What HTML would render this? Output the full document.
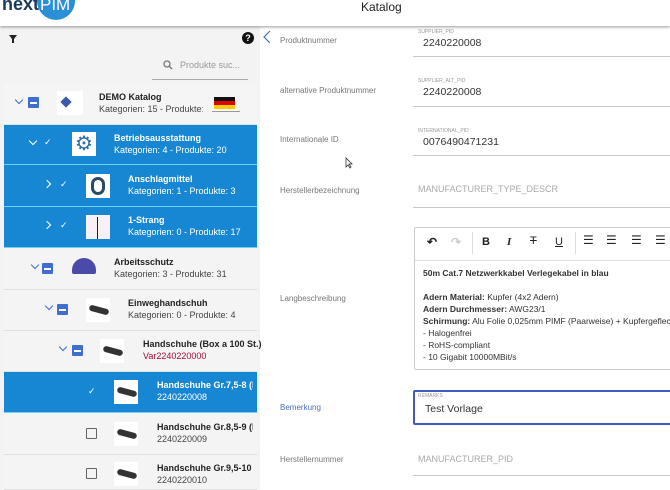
<!DOCTYPE html>
<html><head><meta charset="utf-8"><style>
*{box-sizing:border-box;margin:0;padding:0}
body{width:670px;height:490px;overflow:hidden;background:#fff;font-family:"Liberation Sans",Arial,sans-serif;position:relative}
.a{position:absolute;white-space:nowrap}
#hdr{position:absolute;left:0;top:0;width:670px;height:26px;background:#fff;box-shadow:0 1px 3px rgba(0,0,0,.4);z-index:5;overflow:hidden}
#left{position:absolute;left:0;top:26px;width:260px;height:464px;background:#f3f3f3}
.row{position:absolute;left:4px;width:253px;height:41px;background:#f4f4f4;border-bottom:1px solid #e0e0e0}
.row.b{background:#1787d3;border-bottom:1px solid #6fd3ef}
.t1{font-size:9px;font-weight:bold;color:#222;position:absolute;white-space:nowrap;overflow:hidden}
.t2{font-size:9px;color:#444;position:absolute;white-space:nowrap;overflow:hidden}
.b .t1,.b .t2{color:#fff}
.cb{position:absolute;width:11px;height:11px;background:#3e6fd0;border-radius:1px}
.cb:after{content:"";position:absolute;left:2px;top:5px;width:7px;height:1.5px;background:#fff}
.ecb{position:absolute;width:11px;height:11px;border:1.5px solid #666;border-radius:1px}
.img{position:absolute;width:24px;height:24px;background:#fff}
.lbl{position:absolute;left:280px;font-size:8px;color:#777;white-space:nowrap}
.sm{position:absolute;left:418px;font-size:5px;color:#999;white-space:nowrap}
.val{position:absolute;left:423px;font-size:10.5px;color:#333;white-space:nowrap}
.ph{position:absolute;left:418px;font-size:9px;color:#aaa;white-space:nowrap}
.ul{position:absolute;left:413px;width:257px;height:1px;background:#c8c8c8}
.ed{position:absolute;left:414px;top:227px;width:260px;height:143px;border:1px solid #ccc;border-radius:2px}
.tb{position:absolute;font-size:12px;color:#222;font-weight:bold;white-space:nowrap}
.et{position:absolute;left:423px;font-size:8.5px;color:#333;white-space:nowrap}
.chv{position:absolute;width:6px;height:6px;border-right:1.5px solid #fff;border-bottom:1.5px solid #fff}
</style></head><body>
<div id="hdr">
 <div class="a" style="left:-4px;top:-6px;font-size:18px;font-weight:bold;color:#1a3a5a">·next</div>
 <div class="a" style="left:37px;top:-18px;width:38px;height:38px;border-radius:50%;background:#2a8fd6"></div>
 <div class="a" style="left:40px;top:-5px;font-size:17px;color:#fff">PIM</div>
 <div class="a" style="left:361px;top:0px;font-size:12px;color:#222">Katalog</div>
</div>
<div id="left">
 <svg class="a" style="left:9px;top:9px" width="8" height="8" viewBox="0 0 8 8"><path d="M0 0H8L5 4V8H3V4Z" fill="#222"/></svg>
 <div class="a" style="left:242px;top:6px;width:12px;height:12px;border-radius:50%;background:#111;color:#fff;font-size:9px;font-weight:bold;text-align:center;line-height:12px">?</div>
 <svg class="a" style="left:163px;top:34px" width="10" height="10" viewBox="0 0 10 10"><circle cx="4" cy="4" r="3" fill="none" stroke="#777" stroke-width="1.3"/><path d="M6 6L9 9" stroke="#777" stroke-width="1.3"/></svg>
 <div class="a" style="left:180px;top:34px;font-size:9px;color:#999">Produkte suc...</div>
 <div class="a" style="left:152px;top:53px;width:96px;height:1px;background:#aaa"></div>
</div>
<div class="row" style="top:83px;height:42px;background:#f5f5f5">
 <div class="chv" style="left:12px;top:14px;border-color:#3e6fd0;transform:rotate(45deg)"></div>
 <div class="cb" style="left:24px;top:14px"></div>
 <div class="img" style="left:53px;top:8px;width:26px"><div class="a" style="left:5px;top:7px;width:8px;height:8px;background:#3a5ab0;transform:rotate(45deg)"></div></div>
 <div class="t1" style="left:95px;top:9px">DEMO Katalog</div>
 <div class="t2" style="left:95px;top:21px;width:104px">Kategorien: 15 - Produkte: 96</div>
 <div class="a" style="left:210px;top:14px;width:21px;height:4px;background:#111"></div>
 <div class="a" style="left:210px;top:18px;width:21px;height:4px;background:#d00"></div>
 <div class="a" style="left:210px;top:22px;width:21px;height:4px;background:#fc0"></div>
 <div class="a" style="left:208px;top:28px;width:28px;height:1px;background:#999"></div>
</div>
<div class="row b" style="top:125px;height:40px">
 <div class="chv" style="left:26px;top:13px;transform:rotate(45deg)"></div>
 <div class="a" style="left:40px;top:12px;font-size:9px;color:#fff">✓</div>
 <div class="img" style="left:68px;top:7px;color:#2a6fb0;font-size:20px;line-height:24px;text-align:center">⚙</div>
 <div class="t1" style="left:110px;top:8px">Betriebsausstattung</div>
 <div class="t2" style="left:110px;top:20px">Kategorien: 4 - Produkte: 20</div>
</div>
<div class="row b" style="top:165px;height:42px">
 <div class="chv" style="left:40px;top:16px;transform:rotate(-45deg)"></div>
 <div class="a" style="left:56px;top:14px;font-size:9px;color:#fff">✓</div>
 <div class="img" style="left:82px;top:9px"><div class="a" style="left:5px;top:3px;width:14px;height:18px;border:3px solid #2a4a6a;border-radius:7px"></div></div>
 <div class="t1" style="left:124px;top:9px">Anschlagmittel</div>
 <div class="t2" style="left:124px;top:21px">Kategorien: 1 - Produkte: 3</div>
</div>
<div class="row b" style="top:207px;height:41px">
 <div class="chv" style="left:40px;top:15px;transform:rotate(-45deg)"></div>
 <div class="a" style="left:56px;top:13px;font-size:9px;color:#fff">✓</div>
 <div class="img" style="left:82px;top:8px;background:#f8f0f4"><div class="a" style="left:11px;top:2px;width:1px;height:22px;background:#222"></div></div>
 <div class="t1" style="left:124px;top:8px">1-Strang</div>
 <div class="t2" style="left:124px;top:20px">Kategorien: 0 - Produkte: 17</div>
</div>
<div class="row" style="top:248px;height:42px">
 <div class="chv" style="left:28px;top:14px;border-color:#3e6fd0;transform:rotate(45deg)"></div>
 <div class="cb" style="left:38px;top:15px"></div>
 <div class="a" style="left:68px;top:10px;width:24px;height:16px;background:#4a4aa8;border-radius:12px 12px 2px 2px"></div>
 <div class="t1" style="left:110px;top:9px">Arbeitsschutz</div>
 <div class="t2" style="left:110px;top:21px">Kategorien: 3 - Produkte: 31</div>
</div>
<div class="row" style="top:290px;height:41px">
 <div class="chv" style="left:42px;top:13px;border-color:#3e6fd0;transform:rotate(45deg)"></div>
 <div class="cb" style="left:53px;top:14px"></div>
 <div class="img" style="left:82px;top:8px"><div class="a" style="left:3px;top:9px;width:20px;height:6px;background:#333;border-radius:3px;transform:rotate(15deg)"></div></div>
 <div class="t1" style="left:124px;top:8px">Einweghandschuh</div>
 <div class="t2" style="left:124px;top:20px">Kategorien: 0 - Produkte: 4</div>
</div>
<div class="row" style="top:331px;height:41px">
 <div class="chv" style="left:56px;top:13px;border-color:#3e6fd0;transform:rotate(45deg)"></div>
 <div class="cb" style="left:68px;top:14px"></div>
 <div class="img" style="left:96px;top:8px"><div class="a" style="left:3px;top:9px;width:20px;height:6px;background:#333;border-radius:3px;transform:rotate(15deg)"></div></div>
 <div class="t1" style="left:139px;top:8px">Handschuhe (Box a 100 St.)</div>
 <div class="t2" style="left:139px;top:20px;color:#a0103a">Var2240220000</div>
</div>
<div class="row b" style="top:372px;height:41px">
 <div class="a" style="left:84px;top:14px;font-size:9px;color:#fff">✓</div>
 <div class="img" style="left:110px;top:8px"><div class="a" style="left:3px;top:9px;width:20px;height:6px;background:#333;border-radius:3px;transform:rotate(15deg)"></div></div>
 <div class="t1" style="left:153px;top:8px;width:96px">Handschuhe Gr.7,5-8 (Box</div>
 <div class="t2" style="left:153px;top:20px">2240220008</div>
</div>
<div class="row" style="top:413px;height:42px">
 <div class="ecb" style="left:82px;top:15px"></div>
 <div class="img" style="left:110px;top:9px"><div class="a" style="left:3px;top:9px;width:20px;height:6px;background:#333;border-radius:3px;transform:rotate(15deg)"></div></div>
 <div class="t1" style="left:153px;top:9px;width:96px">Handschuhe Gr.8,5-9 (Box</div>
 <div class="t2" style="left:153px;top:21px">2240220009</div>
</div>
<div class="row" style="top:455px;height:35px">
 <div class="ecb" style="left:82px;top:13px"></div>
 <div class="img" style="left:110px;top:7px"><div class="a" style="left:3px;top:9px;width:20px;height:6px;background:#333;border-radius:3px;transform:rotate(15deg)"></div></div>
 <div class="t1" style="left:153px;top:8px;width:96px">Handschuhe Gr.9,5-10 (Bo</div>
 <div class="t2" style="left:153px;top:20px">2240220010</div>
</div>

<svg class="a" style="left:263px;top:30px" width="8" height="14" viewBox="0 0 8 14"><path d="M7 1L1 7L7 13" fill="none" stroke="#4a6fc0" stroke-width="1.2"/></svg>
<div class="lbl" style="top:36px">Produktnummer</div>
<div class="sm" style="top:29px">SUPPLIER_PID</div>
<div class="val" style="top:37px">2240220008</div>
<div class="ul" style="top:56px"></div>
<div class="lbl" style="top:86px">alternative Produktnummer</div>
<div class="sm" style="top:78px">SUPPLIER_ALT_PID</div>
<div class="val" style="top:86px">2240220008</div>
<div class="ul" style="top:106px"></div>
<div class="lbl" style="top:135px">Internationale ID</div>
<div class="sm" style="top:128px">INTERNATIONAL_PID</div>
<div class="val" style="top:136px">0076490471231</div>
<div class="ul" style="top:155px"></div>
<svg class="a" style="left:345px;top:157px" width="8" height="12" viewBox="0 0 8 12"><path d="M1 1V10L3 8L5 11L6 10L4 7H7Z" fill="#fff" stroke="#333" stroke-width=".8"/></svg>
<div class="lbl" style="top:186px">Herstellerbezeichnung</div>
<div class="ph" style="top:184px">MANUFACTURER_TYPE_DESCR</div>
<div class="ul" style="top:207px"></div>
<div class="ed"><div class="a" style="left:0;top:32px;width:260px;height:1px;background:#ddd"></div></div>
<div class="tb" style="left:427px;top:235px">↶</div>
<div class="tb" style="left:451px;top:235px;color:#ccc">↷</div>
<div class="a" style="left:472px;top:232px;width:1px;height:22px;background:#ddd"></div>
<div class="tb" style="left:482px;top:236px;font-size:11px">B</div>
<div class="tb" style="left:507px;top:236px;font-size:11px;font-style:italic;font-family:'Liberation Serif',serif">I</div>
<div class="tb" style="left:530px;top:235px;font-size:11px;text-decoration:line-through;font-weight:normal">T</div>
<div class="tb" style="left:555px;top:236px;font-size:11px;text-decoration:underline;font-weight:normal">U</div>
<div class="a" style="left:575px;top:232px;width:1px;height:22px;background:#ddd"></div>
<div class="tb" style="left:583px;top:233px;font-weight:normal">☰</div>
<div class="tb" style="left:606px;top:233px;font-weight:normal">☰</div>
<div class="tb" style="left:631px;top:233px;font-weight:normal">☰</div>
<div class="tb" style="left:655px;top:233px;font-weight:normal">☰</div>
<div class="et" style="top:268px;font-weight:bold">50m Cat.7 Netzwerkkabel Verlegekabel in blau</div>
<div class="et" style="top:292px"><b>Adern Material:</b> Kupfer (4x2 Adern)</div>
<div class="et" style="top:304px"><b>Adern Durchmesser:</b> AWG23/1</div>
<div class="et" style="top:316px"><b>Schirmung:</b> Alu Folie 0,025mm PIMF (Paarweise) + Kupfergeflecht</div>
<div class="et" style="top:328px">- Halogenfrei</div>
<div class="et" style="top:340px">- RoHS-compliant</div>
<div class="et" style="top:352px">- 10 Gigabit 10000MBit/s</div>
<div class="lbl" style="top:294px">Langbeschreibung</div>
<div class="lbl" style="top:403px;color:#4a6fc0">Bemerkung</div>
<div class="a" style="left:413px;top:390px;width:260px;height:35px;border:2px solid #3f5bbf;border-radius:2px"></div>
<div class="sm" style="top:393px">REMARKS</div>
<div class="val" style="left:425px;top:403px">Test Vorlage</div>
<div class="lbl" style="top:455px">Herstellernummer</div>
<div class="ph" style="top:454px">MANUFACTURER_PID</div>
<div class="ul" style="top:475px"></div>
</body></html>
